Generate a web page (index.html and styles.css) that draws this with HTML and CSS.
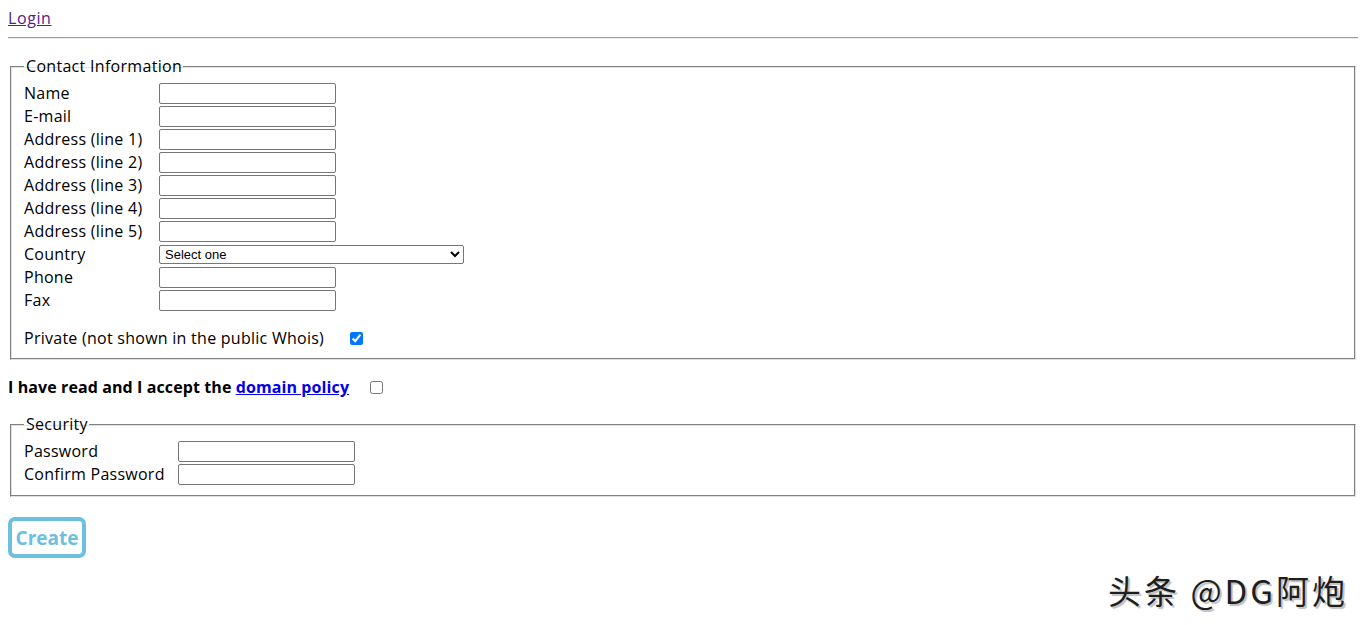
FILE: index.html
```html
<!DOCTYPE html>
<html>
<head>
<meta charset="utf-8">
<link rel="stylesheet" href="styles.css">
</head>
<body>
<a class="login" href="#">Login</a>
<hr class="rule">
<form class="form">
  <fieldset class="box contact">
    <legend class="legend">Contact Information</legend>
    <div class="grid">
      <label class="lbl">Name</label><input class="field" type="text">
      <label class="lbl">E-mail</label><input class="field" type="text">
      <label class="lbl">Address (line 1)</label><input class="field" type="text">
      <label class="lbl">Address (line 2)</label><input class="field" type="text">
      <label class="lbl">Address (line 3)</label><input class="field" type="text">
      <label class="lbl">Address (line 4)</label><input class="field" type="text">
      <label class="lbl">Address (line 5)</label><input class="field" type="text">
      <label class="lbl">Country</label><select class="country"><option>Select one</option></select>
      <label class="lbl">Phone</label><input class="field" type="text">
      <label class="lbl">Fax</label><input class="field" type="text">
    </div>
    <div class="private">
      <span>Private (not shown in the public Whois)</span>
      <input class="check private-check" type="checkbox" checked>
    </div>
  </fieldset>
  <p class="accept">
    <b class="accept-text">I have read and I accept the <a class="policy" href="#">domain policy</a></b>
    <input class="check accept-check" type="checkbox">
  </p>
  <fieldset class="box security">
    <legend class="legend">Security</legend>
    <div class="grid grid-sec">
      <label class="lbl">Password</label><input class="field" type="password">
      <label class="lbl">Confirm Password</label><input class="field" type="password">
    </div>
  </fieldset>
  <button class="create" type="button">Create</button>
</form>
<div class="watermark">头条 @DG阿炮</div>
</body>
</html>
```
FILE: styles.css
```css
html, body {
  background: #fff;
}
body {
  margin: 8px;
  font-family: "Open Sans", "Noto Sans", sans-serif;
  font-size: 16px;
  line-height: 21px;
  letter-spacing: 0.26px;
  color: #000;
}
.login {
  display: inline-block;
  color: #551a8b;
  font-size: 16px;
  line-height: 21px;
  letter-spacing: 0.6px;
}
.rule {
  margin: 8px 0 0;
  border: 0;
  border-top: 1px solid #9a9a9a;
  border-bottom: 1px solid #eeeeee;
  height: 0;
}
.form {
  margin: 0;
}
.box {
  margin: 17px 2px 0;
  padding: 5px 12px 10px 13px;
  border-color: #808080 #e0e0e0 #e0e0e0 #808080;
  border-style: solid;
  border-width: 1px;
  box-shadow: inset -1px -1px 0 #808080, inset 1px 1px 0 #e0e0e0;
}
.legend {
  padding: 0 1px 0 2px;
  font-size: 16px;
  line-height: 21px;
  letter-spacing: 0.3px;
}
.grid {
  display: grid;
  grid-template-columns: 135px auto;
  justify-content: start;
  align-items: center;
}
.grid-sec {
  grid-template-columns: 154px auto;
}
.lbl {
  font-size: 16px;
  line-height: 21px;
  height: 23px;
  display: flex;
  align-items: center;
}
.field {
  box-sizing: border-box;
  width: 177px;
  height: 21px;
  margin: 1px 0;
  border: 1px solid #767676;
  border-radius: 2px;
  padding: 1px 2px;
  font-size: 13px;
}
.country {
  box-sizing: border-box;
  width: 305px;
  height: 19px;
  margin: 2px 0;
  border: 1px solid #767676;
  border-radius: 2px;
  font-family: "Liberation Sans", Arial, sans-serif;
  font-size: 13px;
  letter-spacing: 0;
  background: #fff;
  padding: 0 1px;
}
.private {
  display: flex;
  align-items: center;
  margin-top: 16px;
  font-size: 16px;
  line-height: 21px;
}
.check {
  width: 13px;
  height: 13px;
  margin: 0;
}
.private-check {
  margin-left: 26px;
}
.accept {
  display: flex;
  align-items: center;
  margin: 17px 0 0;
  font-size: 16px;
  line-height: 21px;
}
.accept-text {
  letter-spacing: 0.1px;
}
.policy {
  color: #0000ee;
}
.accept-check {
  margin-left: 21px;
}
.security {
  margin-top: 16px;
}
.create {
  display: block;
  margin-top: 20px;
  box-sizing: border-box;
  width: 78px;
  height: 41px;
  border: 4px solid #6cbfdf;
  border-radius: 7px;
  background: #fff;
  color: #6cbfdf;
  font-family: "Open Sans", "Noto Sans", sans-serif;
  font-weight: 700;
  font-size: 19px;
  letter-spacing: 0;
  padding: 0;
}
.watermark {
  position: absolute;
  left: 1108px;
  top: 569px;
  font-family: "Noto Sans CJK SC", "Noto Sans", sans-serif;
  font-size: 33px;
  line-height: 42px;
  color: #1e1e1e;
  letter-spacing: 3px;
  text-shadow: 2px 2px 1px rgba(0, 0, 0, 0.25), -1px -1px 0 #fff;
}
```
